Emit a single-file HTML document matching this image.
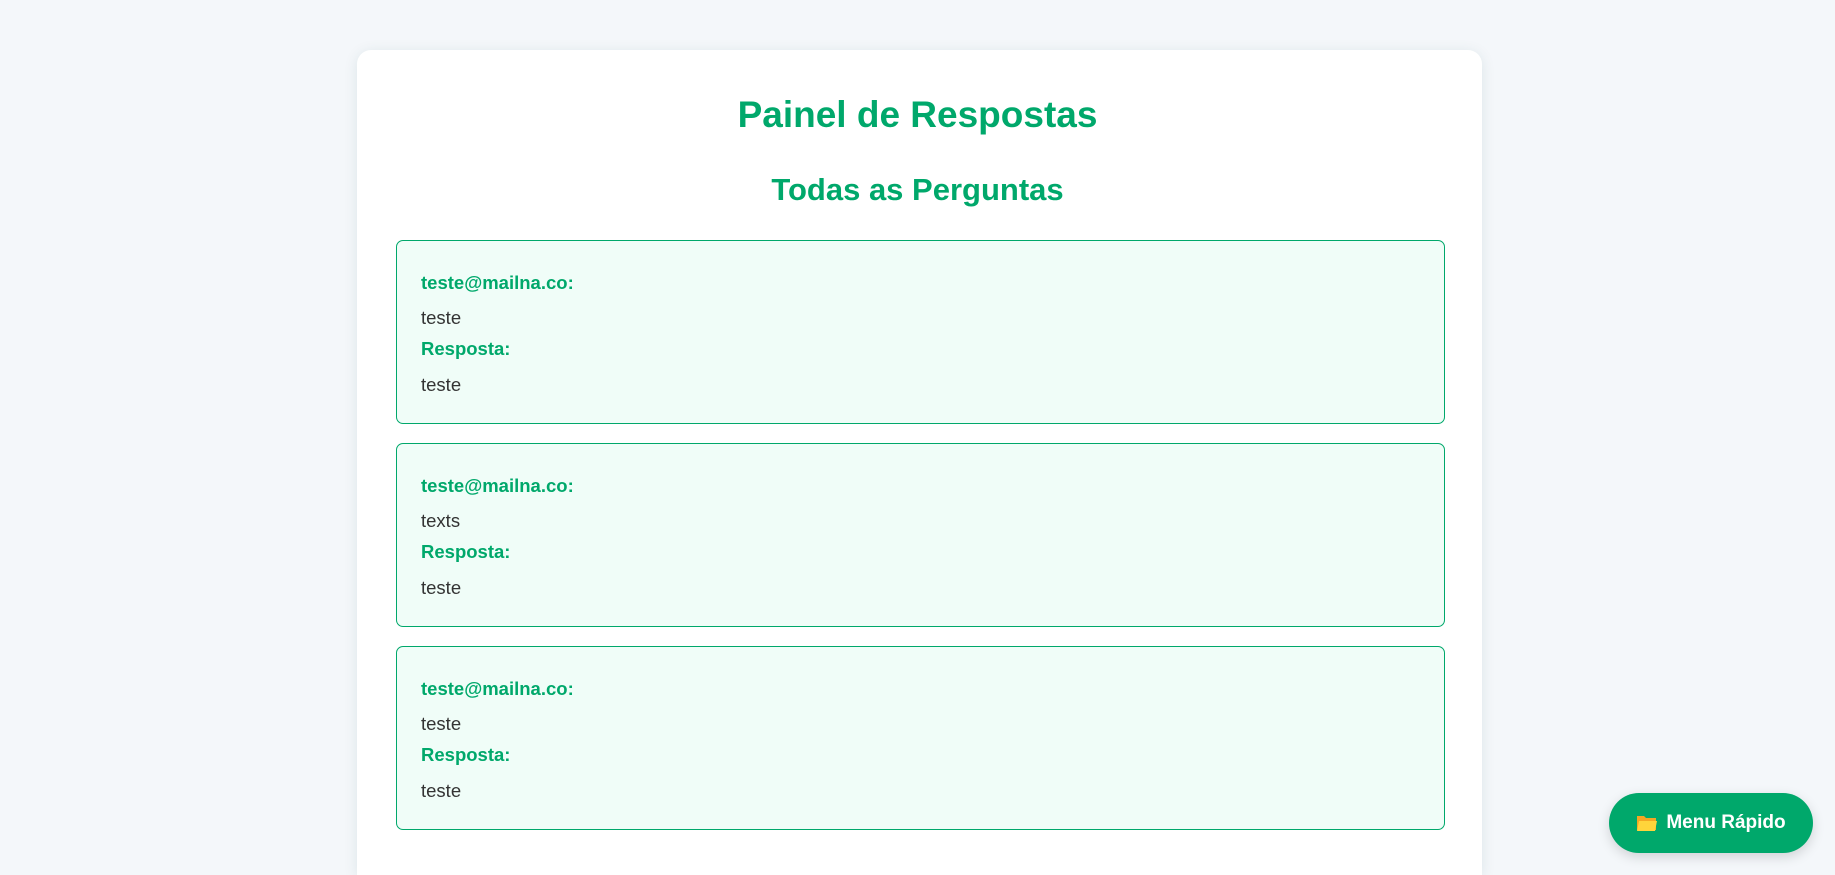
<!DOCTYPE html>
<html><head><meta charset="utf-8"><style>
html,body{margin:0;padding:0;width:1835px;height:875px;overflow:hidden;}
body{background:#f4f7fa;font-family:"Liberation Sans",sans-serif;position:relative;}
.card{position:absolute;left:357px;top:50px;width:1125px;height:825px;background:#fff;border-radius:14px 14px 0 0;box-shadow:0 2px 14px rgba(0,80,80,0.10);}
h1{position:absolute;left:0;right:0;top:90px;margin:0;text-align:center;color:#00a86b;font-size:37px;font-weight:bold;line-height:50px;}
h2{position:absolute;left:0;right:0;top:168px;margin:0;text-align:center;color:#00a86b;font-size:31px;font-weight:bold;line-height:44px;}
.item{position:absolute;left:396px;width:1047px;height:182px;background:#f0fdf8;border:1px solid #00a86b;border-radius:7px;}
.item div{position:absolute;left:24px;font-size:18.5px;line-height:24px;color:#333;}
.item .g{color:#00a86b;font-weight:bold;}
.btn{position:absolute;left:1609px;top:793px;width:204px;height:60px;border-radius:30px;background:#00a86b;color:#fff;font-weight:bold;font-size:19px;display:flex;align-items:center;justify-content:center;box-shadow:0 4px 12px rgba(0,0,0,0.15);}
</style></head><body>
<div class="card"></div>
<h1>Painel de Respostas</h1>
<h2>Todas as Perguntas</h2>
<div class="item" style="top:240px"><div class="g" style="top:30px">teste@mailna.co:</div><div style="top:65px">teste</div><div class="g" style="top:96px">Resposta:</div><div style="top:132px">teste</div></div>
<div class="item" style="top:443px"><div class="g" style="top:30px">teste@mailna.co:</div><div style="top:65px">texts</div><div class="g" style="top:96px">Resposta:</div><div style="top:132px">teste</div></div>
<div class="item" style="top:646px"><div class="g" style="top:30px">teste@mailna.co:</div><div style="top:65px">teste</div><div class="g" style="top:96px">Resposta:</div><div style="top:132px">teste</div></div>
<div class="btn"><svg width="22" height="18" viewBox="0 0 22 18" style="margin-right:8px"><path d="M1 2h7l2 2h10v12H1z" fill="#f5a623"/><path d="M3 7h18l-2 10H1z" fill="#ffd43b"/></svg>Menu Rápido</div>
</body></html>
